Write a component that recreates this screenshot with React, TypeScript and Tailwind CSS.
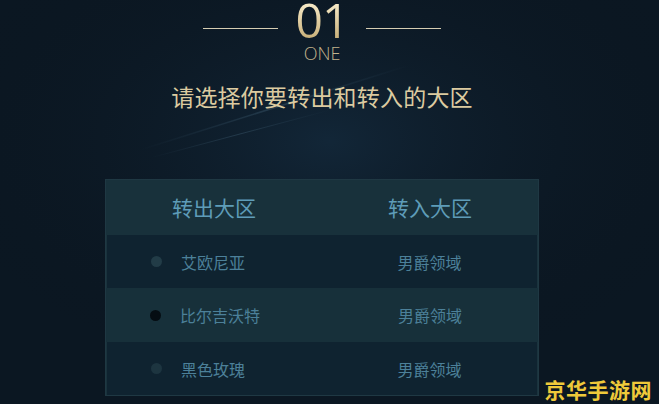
import React from "react";

const rows = [
  { from: "艾欧尼亚", to: "男爵领域", dot: "bg-[#223c47]", bg: "bg-[#0f2330]" },
  { from: "比尔吉沃特", to: "男爵领域", dot: "bg-[#050d13]", bg: "bg-[#17303a]" },
  { from: "黑色玫瑰", to: "男爵领域", dot: "bg-[#1d3540]", bg: "bg-[#0f2330]" },
];

export default function App() {
  return (
    <div
      className="relative w-[659px] h-[404px] overflow-hidden bg-[#0b1722]"
      style={{ fontFamily: '"Noto Sans CJK SC", "Noto Sans", sans-serif' }}
    >
      <svg className="absolute inset-0 pointer-events-none" width="659" height="404">
        <defs>
          <linearGradient id="streak" x1="0" y1="1" x2="1" y2="0">
            <stop offset="0" stopColor="#3a5a70" stopOpacity="0" />
            <stop offset="0.5" stopColor="#4a6c82" stopOpacity="0.35" />
            <stop offset="1" stopColor="#3a5a70" stopOpacity="0" />
          </linearGradient>
          <radialGradient id="glow" cx="0.5" cy="0.35" r="0.6">
            <stop offset="0" stopColor="#13283a" stopOpacity="0.9" />
            <stop offset="1" stopColor="#0a141e" stopOpacity="0" />
          </radialGradient>
        </defs>
        <rect width="659" height="404" fill="url(#glow)" />
        <path d="M140 150 L410 65" stroke="url(#streak)" strokeWidth="1.5" />
        <path d="M150 158 L330 110" stroke="url(#streak)" strokeWidth="1" />
      </svg>

      <div className="relative w-[644px] flex flex-col items-center">
        <div className="flex items-start">
          <div className="w-[75px] h-px bg-[#d6cdb2] mt-[28px]" />
          <div
            className="mx-[18px] h-[40px] text-[48px] leading-[40px] font-normal tracking-[-1px] bg-gradient-to-b from-[#fbf0d0] to-[#c7ae76] bg-clip-text text-transparent"
            style={{ fontFamily: '"Open Sans", sans-serif' }}
          >
            01
          </div>
          <div className="w-[75px] h-px bg-[#d6cdb2] mt-[28px]" />
        </div>
        <div
          className="mt-[4px] text-[18px] leading-none font-light text-[#c3b48c]"
          style={{ fontFamily: '"Open Sans", sans-serif' }}
        >
          ONE
        </div>
        <div className="mt-[23px] text-[23px] leading-none text-[#dccba0] tracking-[0.2px]">
          请选择你要转出和转入的大区
        </div>

        <div className="mt-[71px] w-[434px] border border-[#1f3843] bg-[#1a333d]">
          <div className="grid grid-cols-2 h-[55px] items-center bg-[#18313b]">
            <div className="text-center text-[21px] text-[#5e9cb8]">转出大区</div>
            <div className="text-center text-[21px] text-[#5e9cb8]">转入大区</div>
          </div>
          {rows.map((r, i) => (
            <div
              key={i}
              className={`grid grid-cols-2 items-center ${i === 1 ? "h-[54px]" : "h-[53px]"} ${r.bg} ${i !== 1 ? "mx-px" : ""}`}
            >
              <div className="flex items-center pl-[44px]">
                <div className={`w-[11px] h-[11px] rounded-full ${r.dot}`} />
                <div className="ml-[19px] text-[16px] text-[#4c8099]">{r.from}</div>
              </div>
              <div className="text-center text-[16px] text-[#4c8099]">{r.to}</div>
            </div>
          ))}
        </div>
      </div>

      <div className="absolute right-[7px] bottom-[4px] text-[21px] font-bold leading-none text-[#efc93a] tracking-[0.5px]">
        京华手游网
      </div>
    </div>
  );
}
